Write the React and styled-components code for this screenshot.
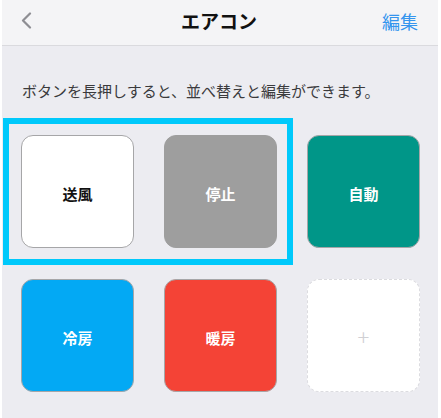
import React from "react"
import styled, { createGlobalStyle } from "styled-components"

const GlobalStyle = createGlobalStyle`
  html, body {
    margin: 0;
    padding: 0;
    background: #ffffff;
    font-family: "Noto Sans CJK JP", "Noto Sans", sans-serif;
  }
`

const Screen = styled.div`
  margin: 0 3px 0 2px;
  height: 418px;
  display: flex;
  flex-direction: column;
  background: #ececf1;
`

const Header = styled.header`
  height: 46px;
  flex: 0 0 46px;
  display: grid;
  grid-template-columns: 1fr auto 1fr;
  align-items: center;
  padding: 0 20px 2px 18px;
  box-sizing: border-box;
  background: #f4f4f6;
  border-bottom: 1px solid #dadade;
`

const BackButton = styled.button`
  justify-self: start;
  display: flex;
  align-items: center;
  padding: 0;
  border: none;
  background: none;
  margin-bottom: 2px;
`

const Title = styled.h1`
  margin: 0;
  font-size: 19px;
  font-weight: 700;
  color: #111;
  line-height: 24px;
  margin-bottom: 2px;
`

const EditLink = styled.span`
  justify-self: end;
  font-size: 18px;
  line-height: 24px;
  color: #3595ee;
  margin-bottom: 1px;
`

const Body = styled.main`
  flex: 1;
  padding: 35px 0 0 19px;
`

const Hint = styled.p`
  margin: 0 0 34px 1px;
  font-size: 15px;
  line-height: 20px;
  color: #3a3a3c;
`

const Grid = styled.div`
  display: grid;
  grid-template-columns: repeat(3, 113px);
  grid-auto-rows: 113px;
  column-gap: 30px;
  row-gap: 31px;
`

const Selection = styled.div`
  grid-column: 1 / span 2;
  grid-row: 1;
  margin: -17px -16px -17px -18px;
  border: 6px solid #00c9fb;
  pointer-events: none;
  z-index: 1;
`

const Tile = styled.div`
  grid-row: ${(props) => props.row};
  grid-column: ${(props) => props.col};
  display: flex;
  align-items: center;
  justify-content: center;
  box-sizing: border-box;
  padding-top: 3px;
  border-radius: 12px;
  background: ${(props) => props.bg};
  border: 1px solid ${(props) => props.edge || "#a6a6a8"};
  color: ${(props) => (props.dark ? "#111" : "#fff")};
  font-size: 15px;
  font-weight: 700;
`

const AddTile = styled.div`
  grid-row: 2;
  grid-column: 3;
  display: flex;
  align-items: center;
  justify-content: center;
  box-sizing: border-box;
  border-radius: 12px;
  background: #fff;
  border: 1.5px dashed #dcdce0;
  color: #d0d0d4;
  font-size: 22px;
  font-weight: 300;
`

const tiles = [
  { label: "送風", bg: "#ffffff", dark: true, row: 1, col: 1 },
  { label: "停止", bg: "#9e9e9e", edge: "#9e9e9e", row: 1, col: 2 },
  { label: "自動", bg: "#009688", row: 1, col: 3 },
  { label: "冷房", bg: "#03a9f4", row: 2, col: 1 },
  { label: "暖房", bg: "#f44336", row: 2, col: 2 },
]

const App = () => {
  return (
    <Screen>
      <GlobalStyle />
      <Header>
        <BackButton aria-label="戻る">
          <svg width="12" height="17" viewBox="0 0 12 17">
            <path
              d="M10 1.5 L3 8.5 L10 15.5"
              fill="none"
              stroke="#8e8e93"
              strokeWidth="2.2"
              strokeLinecap="round"
              strokeLinejoin="round"
            />
          </svg>
        </BackButton>
        <Title>エアコン</Title>
        <EditLink>編集</EditLink>
      </Header>
      <Body>
        <Hint>ボタンを長押しすると、並べ替えと編集ができます。</Hint>
        <Grid>
          <Selection />
          {tiles.map((t) => (
            <Tile key={t.label} {...t}>
              {t.label}
            </Tile>
          ))}
          <AddTile>+</AddTile>
        </Grid>
      </Body>
    </Screen>
  )
}

export default App
